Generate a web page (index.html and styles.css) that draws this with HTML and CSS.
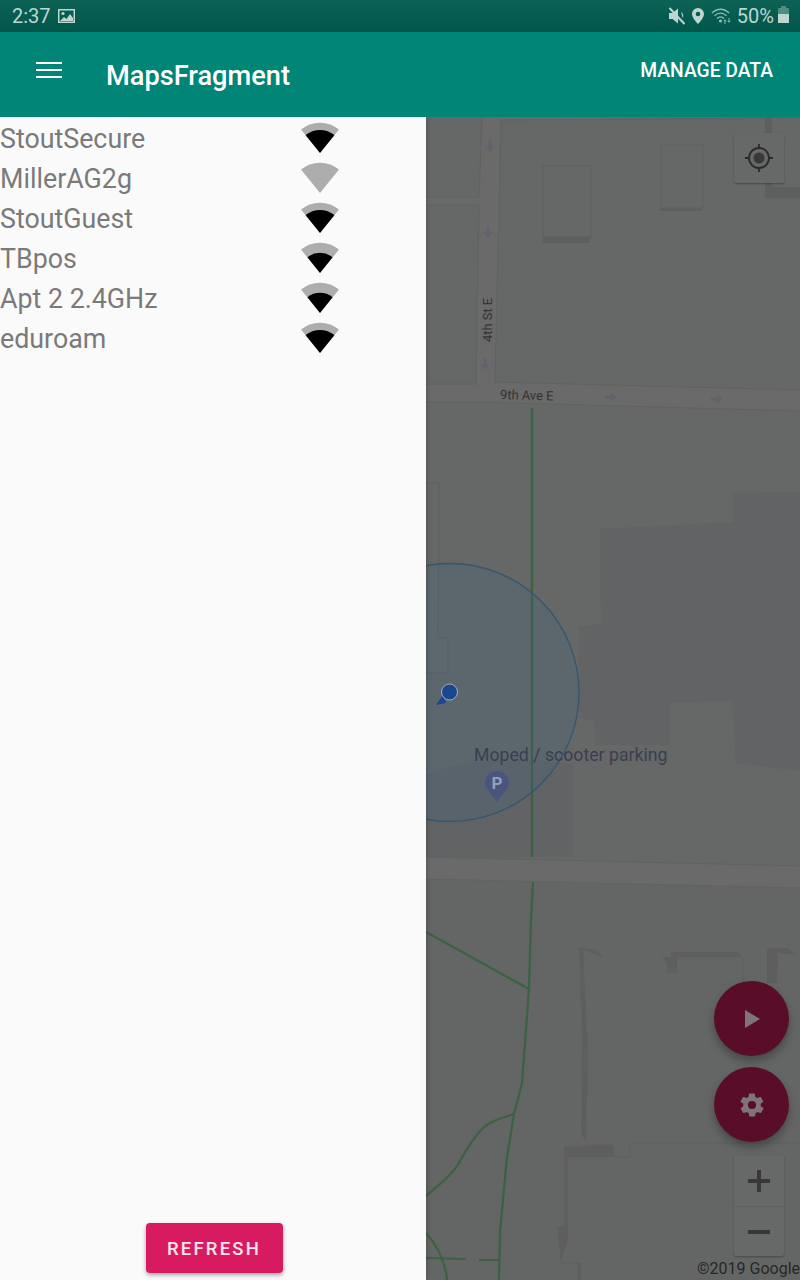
FILE: index.html
```html
<!DOCTYPE html>
<html lang="en">
<head>
    <title>MapsFragment</title>
    <meta charset="utf-8">
    <link rel="stylesheet" href="styles.css">
</head>
<body>
    <svg class="defs" width="0" height="0">
        <symbol id="wifi-low" viewBox="0 0 40 34">
            <path class="wifi-off" d="M1 8.500 A30.500 30.500 0 0 1 39 8.500 L20 32 Z"/>
            <path class="wifi-on" d="M7.400 16.300 A20 20 0 0 1 32.600 16.300 L20 32 Z"/>
        </symbol>
        <symbol id="wifi-mid" viewBox="0 0 40 34">
            <path class="wifi-off" d="M1 8.500 A30.500 30.500 0 0 1 39 8.500 L20 32 Z"/>
            <path class="wifi-on" d="M5.500 14.100 A23 23 0 0 1 34.500 14.100 L20 32 Z"/>
        </symbol>
        <symbol id="wifi-none" viewBox="0 0 40 34">
            <path class="wifi-off" d="M1 8.500 A30.500 30.500 0 0 1 39 8.500 L20 32 Z"/>
        </symbol>
    </svg>

    <div class="status-bar">
        <span class="clock">2:37</span>
        <svg class="status-photo" width="17" height="14" viewBox="0 0 17 14">
            <path d="M0 0h17v14H0z M1.500 1.500v11h14v-11z" fill-rule="evenodd"/>
            <circle cx="5" cy="4.500" r="1.600"/>
            <path d="M2 12l4-4 2.500 2 3.500-5 3 4v3z"/>
        </svg>
        <div class="status-right">
            <svg width="20" height="20" viewBox="0 0 20 20">
                <path d="M2 7h3.500L11 2.500v15L5.500 13H2z"/>
                <path d="M14 6c1.500 1 2.300 2.500 2.300 4 0 .7-.2 1.400-.5 2z"/>
                <path class="status-cut" d="M2.500 2l15 16"/>
            </svg>
            <svg width="14" height="20" viewBox="0 0 14 20">
                <path d="M7 2a6 6 0 0 0-6 6c0 4.200 6 10 6 10s6-5.800 6-10a6 6 0 0 0-6-6zm0 8.300A2.300 2.300 0 1 1 7 5.700a2.300 2.300 0 0 1 0 4.600z" fill-rule="evenodd"/>
            </svg>
            <svg class="status-wifi" width="22" height="18" viewBox="0 0 22 18">
                <path d="M1 6c5-5 12-5 17 0M3.500 8.800c3.500-3.500 8.500-3.500 12 0M6 11.500c2-2 5-2 7 0"/>
                <circle cx="9.500" cy="14" r="1.600"/>
                <path class="status-arrows" d="M14 17v-4M12.800 14.300L14 12.800l1.200 1.500M18 11v4M16.800 13.800l1.200 1.500 1.200-1.500"/>
            </svg>
            <span class="battery-text">50%</span>
            <div class="battery"><div class="battery-level"></div></div>
        </div>
    </div>

    <div class="toolbar">
        <div class="menu-icon"><span></span><span></span><span></span></div>
        <div class="toolbar-title">MapsFragment</div>
        <div class="toolbar-action">MANAGE DATA</div>
    </div>

    <div class="content">
        <div class="drawer">
            <div class="wifi-list">
                <div class="wifi-row"><span class="wifi-name">StoutSecure</span><svg class="wifi-icon"><use href="#wifi-mid"/></svg></div>
                <div class="wifi-row"><span class="wifi-name">MillerAG2g</span><svg class="wifi-icon"><use href="#wifi-none"/></svg></div>
                <div class="wifi-row"><span class="wifi-name">StoutGuest</span><svg class="wifi-icon"><use href="#wifi-mid"/></svg></div>
                <div class="wifi-row"><span class="wifi-name">TBpos</span><svg class="wifi-icon"><use href="#wifi-low"/></svg></div>
                <div class="wifi-row"><span class="wifi-name">Apt 2 2.4GHz</span><svg class="wifi-icon"><use href="#wifi-low"/></svg></div>
                <div class="wifi-row"><span class="wifi-name">eduroam</span><svg class="wifi-icon"><use href="#wifi-mid"/></svg></div>
            </div>
            <button class="refresh-button">REFRESH</button>
        </div>

        <div class="map">
            <!-- viewBox uses page coordinates so map features read off the screenshot directly -->
            <svg class="map-canvas" viewBox="426 117 374 1163" width="374" height="1163">
                <rect class="ground-low" x="426" y="870" width="374" height="410"/>

                <!-- roads -->
                <path class="road" d="M482 117L479 197 426 197 426 205 479 205 476 384 426 384 426 402 479 402 800 411 800 390 495 382 501 120 800 117z"/>
                <path class="road" d="M426 857L800 866 800 888 426 879z"/>
                <path class="road-edge" d="M482 117L479 197H426M426 205H479L476 384H426M426 402H479L800 411M800 390L495 382 501 120 800 118M426 857L800 866M426 879L800 888"/>
                <path class="arrow" d="M488.500 140h3v6h3l-4.500 6-4.500-6h3zM486.500 226h3v6h3l-4.500 6-4.500-6h3zM483.500 358h3v6h3l-4.500 6-4.500-6h3z"/>
                <path class="arrow" d="M605 395.500h6v-3l6 4.500-6 4.500v-3h-6zM711 397.500h6v-3l6 4.500-6 4.500v-3h-6z"/>

                <!-- buildings at the top -->
                <path class="shadow" d="M543 237H591L589 243H542z"/>
                <rect class="block" x="543" y="166" width="48" height="71"/>
                <path class="shadow" d="M661 208H703L701 211H660z"/>
                <rect class="block" x="661" y="145" width="42" height="63"/>
                <path class="shadow" d="M765 117H772V187H800V198H765z"/>

                <!-- big buildings in the middle -->
                <path class="block" d="M426 483H439L438 638H448V673H426z"/>
                <path class="hall" d="M733 493L800 492V771L736 763 732 701 670 703 669 745 595 745 595 721 579 718 579 627 601 624 600 529 733 522z"/>
                <path class="yard" d="M426 775C470 755 540 758 573 765V857L426 857z"/>

                <!-- buildings at the bottom -->
                <path class="shadow" d="M579 947L596 950 602 955V957H662L667 963V973H677V957H743L737 952H671V957H602L583 950 588 1053 586 1143 581 1133 582 1037z"/>
                <path class="shadow" d="M564 1147L613 1145 614 1157H568V1238L561 1263 557 1227 564 1226z"/>
                <path class="shadow" d="M767 948H788L797 955 778 953 777 983H767z"/>
                <path class="shadow" d="M577 1263H581V1280H577z"/>
                <path class="outline" d="M743 957V985M586 1145H614V1157H630V1143H800M561 1263H579"/>

                <!-- footpaths -->
                <path class="path" d="M532 408V857M533 882L531 920 529 989 522 1083 514 1114 507 1157 500 1232 499 1280"/>
                <path class="path" d="M426 932L529 989M426 1196C440 1184 452 1175 459 1163 465 1152 468 1147 473 1140 480 1130 487 1124 492 1122 500 1118 508 1116 514 1114"/>
                <path class="path" d="M426 1233C436 1244 445 1260 447 1280M426 1258L466 1259M479 1260H499"/>

                <!-- accuracy circle and position -->
                <circle class="accuracy" cx="450" cy="692.500" r="129"/>
                <path class="dot-arrow" d="M436 705L443 695 446 703z"/>
                <circle class="dot" cx="449.500" cy="692" r="8"/>

                <text class="poi-label" x="474" y="761">Moped / scooter parking</text>
                <path class="poi-pin" d="M497 771a12 12 0 0 0-12 12c0 7 8 11 12 20 4-9 12-13 12-20a12 12 0 0 0-12-12z"/>
                <text class="poi-letter" x="497" y="789">P</text>
                <text class="street-label" transform="translate(492 342) rotate(-90)">4th St E</text>
                <text class="street-label" transform="translate(500 399) rotate(1.500)">9th Ave E</text>
            </svg>

            <div class="map-button locate-button">
                <svg width="34" height="34" viewBox="0 0 34 34">
                    <circle class="locate-ring" cx="17" cy="17" r="10"/>
                    <circle class="locate-dot" cx="17" cy="17" r="5.500"/>
                    <path class="locate-ring" d="M17 3V8M17 26V31M3 17H8M26 17H31"/>
                </svg>
            </div>

            <div class="fabs">
                <div class="fab">
                    <svg width="18" height="18" viewBox="0 0 18 18"><path d="M2 0L17 9 2 18z"/></svg>
                </div>
                <div class="fab">
                    <svg width="28" height="28" viewBox="0 0 24 24">
                        <path d="M19.400 13c0-.3.100-.6.100-1s0-.7-.1-1l2.100-1.600c.2-.2.200-.4.100-.6l-2-3.500c-.1-.2-.4-.3-.6-.2l-2.500 1c-.5-.4-1.100-.7-1.700-1l-.4-2.600c0-.2-.2-.4-.5-.4h-4c-.3 0-.5.200-.5.400l-.4 2.600c-.6.300-1.200.6-1.700 1l-2.500-1c-.2-.1-.5 0-.6.200l-2 3.500c-.1.200-.1.400.1.600L4.600 11c0 .3-.1.700-.1 1s0 .7.100 1l-2.100 1.600c-.2.200-.2.400-.1.600l2 3.500c.1.200.4.300.6.200l2.500-1c.5.400 1.100.7 1.700 1l.4 2.600c0 .2.200.4.500.4h4c.3 0 .5-.2.500-.4l.4-2.600c.6-.3 1.200-.6 1.700-1l2.500 1c.2.100.5 0 .6-.2l2-3.500c.1-.2.100-.4-.1-.6zM12 15.500a3.500 3.500 0 1 1 0-7 3.500 3.500 0 0 1 0 7z" fill-rule="evenodd"/>
                    </svg>
                </div>
            </div>

            <div class="zoom-controls">
                <div class="zoom-button">
                    <svg width="24" height="24" viewBox="0 0 24 24"><path d="M10 1h4v9h9v4h-9v9h-4v-9H1v-4h9z"/></svg>
                </div>
                <div class="zoom-button">
                    <svg width="24" height="24" viewBox="0 0 24 24"><path d="M1 10h22v4H1z"/></svg>
                </div>
            </div>

            <div class="copyright">©2019 Google</div>
        </div>
    </div>
</body>
</html>
```

FILE: styles.css
```css
body {
    margin: 0;
    height: 1280px;
    overflow: hidden;
    display: flex;
    flex-direction: column;
    font-family: Roboto, "Liberation Sans", sans-serif;
    background-color: #fafafa;
}
.defs {
    position: absolute;
}

/* status bar */
.status-bar {
    height: 32px;
    flex-shrink: 0;
    display: flex;
    align-items: center;
    padding: 0 11px 0 12px;
    background: linear-gradient(#0c6255, #00564a);
    color: #bcd6d1;
    fill: #bcd6d1;
}
.clock {
    font-size: 20px;
    width: 46px;
}
.status-photo {
    margin-top: -1px;
}
.status-right {
    margin-left: auto;
    display: flex;
    align-items: center;
    gap: 4px;
}
.status-cut {
    stroke: #bcd6d1;
    stroke-width: 2;
    fill: none;
}
.status-wifi {
    fill: #8fbcb3;
    margin: 0 1px 0 2px;
}
.status-wifi path {
    fill: none;
    stroke: #8fbcb3;
    stroke-width: 1.300;
}
.status-wifi .status-arrows {
    stroke-width: 1;
}
.battery-text {
    font-size: 20px;
    margin-left: -1px;
}
.battery {
    width: 11px;
    height: 15px;
    margin-top: -1px;
    background-color: #4f8d81;
    position: relative;
    display: flex;
    align-items: flex-end;
    border-radius: 1px;
}
.battery::before {
    content: "";
    position: absolute;
    top: -2px;
    left: 3px;
    width: 5px;
    height: 2px;
    background-color: #4f8d81;
}
.battery-level {
    width: 100%;
    height: 9px;
    background-color: #bcd6d1;
}

/* toolbar */
.toolbar {
    height: 85px;
    flex-shrink: 0;
    display: flex;
    align-items: center;
    background-color: #008577;
    color: #fff;
    position: relative;
    z-index: 3;
}
.menu-icon {
    width: 26px;
    margin: -9px 0 0 36px;
    display: flex;
    flex-direction: column;
    gap: 5px;
}
.menu-icon span {
    height: 2px;
    background-color: #fff;
}
.toolbar-title {
    margin: 3px 0 0 44px;
    font-size: 27.200px;
    font-weight: 500;
}
.toolbar-action {
    margin: -9px 27px 0 auto;
    font-size: 19.300px;
    font-weight: 500;
}

.content {
    flex: 1;
    display: flex;
    min-height: 0;
}

/* wifi drawer */
.drawer {
    width: 426px;
    flex-shrink: 0;
    display: flex;
    flex-direction: column;
    align-items: center;
    background-color: #fafafa;
    box-shadow: 1px 0 5px rgba(0, 0, 0, 0.2);
    position: relative;
    z-index: 2;
}
.wifi-list {
    width: 100%;
    flex: 1;
    padding-top: 2px;
}
.wifi-row {
    height: 40px;
    display: flex;
    align-items: center;
}
.wifi-name {
    width: 300px;
    font-size: 26.800px;
    color: #7a7a7a;
}
.wifi-icon {
    width: 40px;
    height: 34px;
    margin-top: -2px;
}
.wifi-off {
    fill: #adadad;
}
.wifi-on {
    fill: #000;
}
.refresh-button {
    width: 137px;
    height: 50px;
    margin: 0 0 7px 2px;
    padding: 2px 0 0;
    border: none;
    border-radius: 4px;
    background-color: #d81b60;
    color: #fbe4ec;
    font-family: inherit;
    font-size: 18.500px;
    font-weight: 500;
    letter-spacing: 2.200px;
    box-shadow: 0 2px 4px rgba(0, 0, 0, 0.35);
}

/* map */
.map {
    flex: 1;
    position: relative;
    overflow: hidden;
    background-color: #656866;
}
.map-canvas {
    display: block;
}
.ground-low {
    fill: #646665;
}
.road {
    fill: #696a69;
}
.road-edge {
    fill: none;
    stroke: #616261;
    stroke-width: 1;
}
.arrow {
    fill: #62626b;
}
.block {
    fill: #666867;
    stroke: #5f605f;
    stroke-width: 1;
}
.shadow {
    fill: #5e5e5e;
}
.hall {
    fill: #626365;
}
.yard {
    fill: #616365;
}
.outline {
    fill: none;
    stroke: #5e5e5e;
    stroke-width: 1;
}
.path {
    fill: none;
    stroke: #3a6243;
    stroke-width: 2.200;
}
.accuracy {
    fill: rgba(50, 100, 150, 0.16);
    stroke: #35566f;
    stroke-width: 1.300;
}
.dot {
    fill: #1b4690;
    stroke: #a7adb5;
    stroke-width: 1;
}
.dot-arrow {
    fill: #1b4690;
}
.poi-label {
    font-size: 17.700px;
    fill: #3a3e52;
}
.poi-pin {
    fill: #48557f;
}
.poi-letter {
    font-size: 17px;
    font-weight: 700;
    text-anchor: middle;
    fill: #979eb6;
}
.street-label {
    font-size: 12.900px;
    fill: #333;
}

/* things on top of the map */
.map-button {
    position: absolute;
    top: 16px;
    right: 16px;
    width: 50px;
    height: 50px;
    display: flex;
    align-items: center;
    justify-content: center;
    background-color: #676968;
    border-radius: 2px;
    box-shadow: 0 1px 2px rgba(0, 0, 0, 0.3);
}
.locate-ring {
    fill: none;
    stroke: #2b2b2b;
    stroke-width: 1.800;
}
.locate-dot {
    fill: #383838;
}
.fabs {
    position: absolute;
    top: 864px;
    right: 11px;
    display: flex;
    flex-direction: column;
    gap: 11px;
}
.fab {
    width: 75px;
    height: 75px;
    border-radius: 50%;
    display: flex;
    align-items: center;
    justify-content: center;
    background-color: #5a0d28;
    fill: #7d7578;
    box-shadow: 0 5px 9px rgba(0, 0, 0, 0.3);
}
.zoom-controls {
    position: absolute;
    top: 1039px;
    right: 16px;
    width: 50px;
    background-color: #676968;
    border-radius: 2px;
    box-shadow: 0 1px 2px rgba(0, 0, 0, 0.3);
}
.zoom-button {
    height: 50px;
    display: flex;
    align-items: center;
    justify-content: center;
    fill: #383838;
}
.zoom-button + .zoom-button {
    border-top: 1px solid #5e5f5f;
    height: 49px;
}
.copyright {
    position: absolute;
    left: 271px;
    bottom: 2px;
    font-size: 16px;
    white-space: nowrap;
    color: #262626;
}
```
